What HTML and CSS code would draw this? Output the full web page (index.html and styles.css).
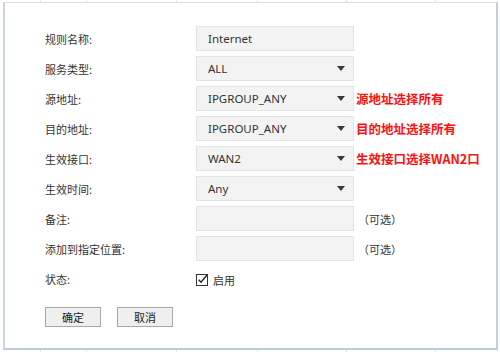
FILE: index.html
```html
<!DOCTYPE html>
<html lang="zh-CN">
<head>
<meta charset="utf-8">
<title>规则设置</title>
<link rel="stylesheet" href="styles.css">
</head>
<body>
<div class="page">
  <div class="strip">
    <span class="cell c1"></span><span class="cell c2"></span><span class="cell c3"></span><span class="cell c4"></span><span class="cell c5"></span><span class="cell c6"></span>
  </div>
  <div class="frame">
    <div class="form">
      <div class="row">
        <span class="label">规则名称:</span>
        <div class="field"><span class="val">Internet</span></div>
      </div>
      <div class="row">
        <span class="label">服务类型:</span>
        <div class="field select"><span class="val">ALL</span><span class="arrow"></span></div>
      </div>
      <div class="row">
        <span class="label">源地址:</span>
        <div class="field select"><span class="val">IPGROUP_ANY</span><span class="arrow"></span></div>
        <span class="note red">源地址选择所有</span>
      </div>
      <div class="row">
        <span class="label">目的地址:</span>
        <div class="field select"><span class="val">IPGROUP_ANY</span><span class="arrow"></span></div>
        <span class="note red">目的地址选择所有</span>
      </div>
      <div class="row">
        <span class="label">生效接口:</span>
        <div class="field select"><span class="val">WAN2</span><span class="arrow"></span></div>
        <span class="note red">生效接口选择WAN2口</span>
      </div>
      <div class="row">
        <span class="label">生效时间:</span>
        <div class="field select"><span class="val">Any</span><span class="arrow"></span></div>
      </div>
      <div class="row">
        <span class="label">备注:</span>
        <div class="field"></div>
        <span class="note opt">（可选）</span>
      </div>
      <div class="row">
        <span class="label">添加到指定位置:</span>
        <div class="field"></div>
        <span class="note opt">（可选）</span>
      </div>
      <div class="row">
        <span class="label">状态:</span>
        <div class="check">
          <svg class="box" width="12" height="12" viewBox="0 0 12 12" aria-hidden="true">
            <rect x="0.5" y="0.5" width="11" height="11" fill="#fff" stroke="#333" stroke-width="1"/>
            <path d="M2.6 5.6 L5 8.2 L10.8 1.2" fill="none" stroke="#222" stroke-width="1.4"/>
          </svg>
          <span class="check-label">启用</span>
        </div>
      </div>
      <div class="buttons">
        <span class="btn">确定</span>
        <span class="btn">取消</span>
      </div>
    </div>
  </div>
  <div class="strip bottom">
    <span class="cell c1"></span><span class="cell c2"></span><span class="cell c3"></span><span class="cell c4"></span><span class="cell c5"></span><span class="cell c6"></span>
  </div>
</div>
</body>
</html>
```
FILE: styles.css
```css
html, body {
  margin: 0;
  padding: 0;
  background: #ffffff;
}
body {
  font-family: "Noto Sans", "Noto Sans CJK SC", sans-serif;
  color: #333333;
  width: 500px;
  height: 352px;
  overflow: hidden;
}
.page {
  width: 500px;
  height: 352px;
}
.strip {
  height: 2px;
  display: flex;
}
.strip .cell {
  height: 2px;
  border-right: 1px solid #e2e2e2;
  box-sizing: border-box;
}
.strip .c1 { width: 41px; }
.strip .c2 { width: 46px; }
.strip .c3 { width: 90px; }
.strip .c4 { width: 81px; }
.strip .c5 { width: 89px; }
.strip .c6 { width: 89px; }
.frame {
  margin-left: 3px;
  width: 495px;
  height: 348px;
  box-sizing: border-box;
  border-top: 1px solid #dedede;
  border-left: 2px solid #cbd7e3;
  border-right: 2px solid #c3d1df;
  border-bottom: 2px solid #bccbdb;
  padding: 23px 0 0 40px;
}
.form {
  display: flex;
  flex-direction: column;
  gap: 5px;
}
.row {
  display: flex;
  align-items: center;
  height: 25px;
}
.label {
  width: 151px;
  font-family: "Noto Sans CJK SC", sans-serif;
  font-size: 11px;
  color: #333333;
}
.field {
  width: 158px;
  height: 25px;
  box-sizing: border-box;
  background: #f3f3f3;
  border: 1px solid #e4e4e4;
  display: flex;
  align-items: center;
  justify-content: space-between;
  padding: 0 8px 0 11px;
}
.val {
  font-size: 11.5px;
  color: #333333;
}
.arrow {
  width: 0;
  height: 0;
  border-left: 4px solid transparent;
  border-right: 4px solid transparent;
  border-top: 5px solid #3a3a3a;
}
.note {
  margin-left: 2px;
  font-family: "Noto Sans CJK SC", sans-serif;
}
.note.red {
  color: #ff1010;
  font-size: 12.5px;
  font-weight: bold;
}
.note.opt {
  font-size: 11px;
  color: #333333;
  margin-left: 4px;
}
.check {
  display: flex;
  align-items: center;
  gap: 5px;
  margin-top: 2px;
}
.box {
  display: block;
}
.check-label {
  font-family: "Noto Sans CJK SC", sans-serif;
  font-size: 11px;
}
.buttons {
  display: flex;
  gap: 16px;
  margin-top: 11px;
}
.btn {
  width: 56px;
  height: 20px;
  box-sizing: border-box;
  border: 1px solid #a8a8a8;
  background: #efefef;
  font-family: "Noto Sans CJK SC", sans-serif;
  font-size: 11px;
  color: #222222;
  display: flex;
  align-items: center;
  justify-content: center;
}
```
